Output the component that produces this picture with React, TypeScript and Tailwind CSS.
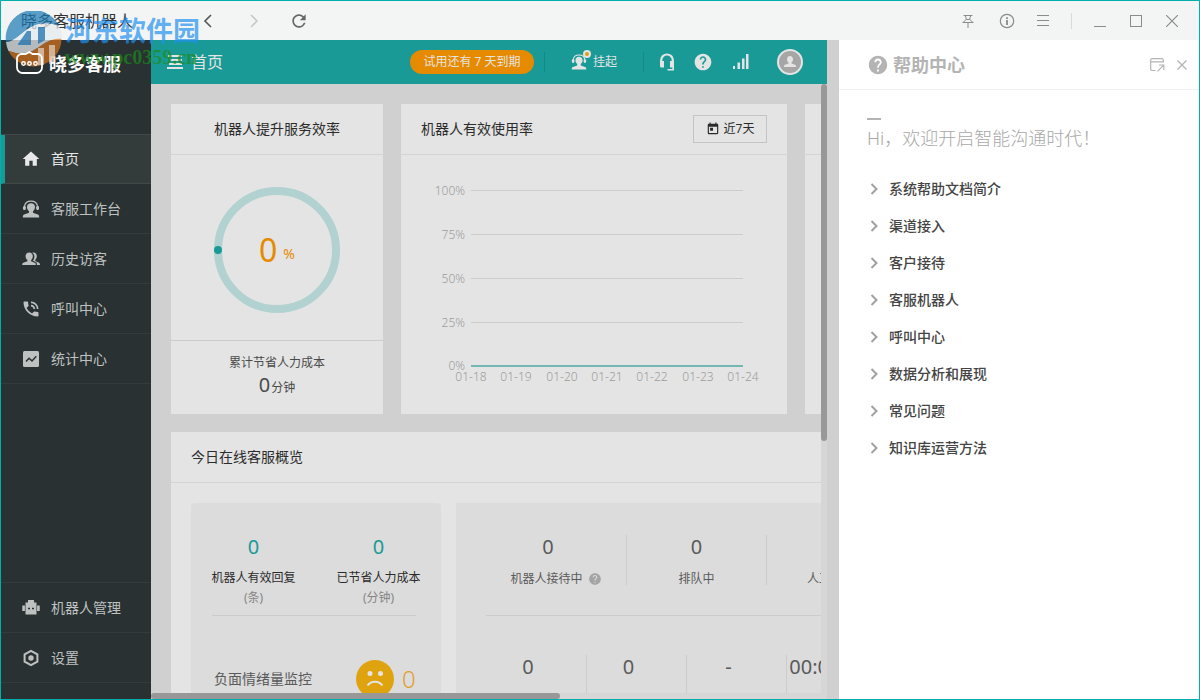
import type { ReactNode } from "react";
import { MdHome, MdPhoneInTalk, MdToday, MdHelp, MdRefresh } from "react-icons/md";

interface NavItem {
  label: string;
  icon: ReactNode;
  active?: boolean;
}

interface StatProps {
  value: string;
  label?: string;
  hint?: boolean;
  spacer?: string;
  className: string;
}

const days = ["01-18", "01-19", "01-20", "01-21", "01-22", "01-23", "01-24"]
const levels = ["100%", "75%", "50%", "25%", "0%"]
const helpTopics = ["系统帮助文档简介", "渠道接入", "客户接待", "客服机器人", "呼叫中心", "数据分析和展现", "常见问题", "知识库运营方法"]

function AgentIcon({ size = 18 }: { size?: number }) {
  return (
    <svg width={size} height={size} viewBox="0 0 18 18" fill="currentColor">
      <path d="M2.500 8V6.500C2.900 3 5.600 1.200 9 1.200s6.100 1.800 6.500 5.300V8" fill="none" stroke="currentColor" strokeWidth="1.200" />
      <rect x="1" y="6" width="2.800" height="4" rx="1.200" />
      <rect x="14.200" y="6" width="2.800" height="4" rx="1.200" />
      <path d="M9 3.200c2.500 0 4 1.600 4 3.900 0 1.800-.9 3.300-2 4.100v1.600l4.800 1.800c1 .4 1.400 1.100 1.400 2.900H.8c0-1.800.4-2.500 1.400-2.900L7 12.800v-1.600C5.900 10.400 5 8.900 5 7.100c0-2.300 1.500-3.900 4-3.900z" />
    </svg>
  )
}

function HeadsetIcon() {
  return (
    <svg width="16" height="18" viewBox="0 0 16 18" fill="none" stroke="currentColor">
      <path d="M2.200 9V7A5.800 5.500 0 0 1 13.800 7v2" strokeWidth="2.200" />
      <path d="M1 8h4v6.500H2.500A1.500 1.500 0 0 1 1 13zM11 8h4v6.500h-4z" fill="currentColor" stroke="none" />
      <path d="M14.200 13v3.800H8.500" strokeWidth="1.600" />
    </svg>
  )
}

function VisitorsIcon() {
  return (
    <svg width="18" height="18" viewBox="0 0 18 18" fill="currentColor">
      <path d="M7.200 2.500c2.300 0 3.600 1.600 3.600 3.800 0 1.700-.7 3-1.700 3.800v1.200l3.600 1.500c.8.400 1.200 1 1.200 2.200H.2c0-1.200.4-1.800 1.200-2.200l4-1.500v-1.200C4.300 9.300 3.600 8 3.600 6.300c0-2.200 1.300-3.800 3.600-3.800z" />
      <path d="M10.300 2.700c2.700-.8 4.500 1 4.500 3.500 0 1.500-.6 2.700-1.500 3.500v1.300l3.600 1.700c.8.400 1.100 1 1.100 2.300h-3c0-1.800-.6-2.700-1.700-3.200l-2.300-1v-.5c.9-.9 1.400-2.300 1.400-3.900 0-1.500-.8-2.900-2.100-3.700z" />
    </svg>
  )
}

function StatsIcon() {
  return (
    <svg width="18" height="18" viewBox="0 0 18 18">
      <rect x="1" y="1" width="16" height="16" rx="1.500" fill="currentColor" />
      <path d="M4 11.500l3-3.200 3 2.600 4.300-4.700" fill="none" stroke="#293132" strokeWidth="1.500" />
    </svg>
  )
}

function RobotIcon() {
  return (
    <svg width="18" height="18" viewBox="0 0 18 18" fill="currentColor">
      <path d="M6 1h6v2.500h2.500v12h-11v-12H6z" />
      <rect x="0.300" y="6.500" width="2.600" height="5.500" />
      <rect x="15.100" y="6.500" width="2.600" height="5.500" />
      <path d="M6 8.800h2v1.500H6zM10 8.800h2v1.500h-2z" fill="#293132" />
    </svg>
  )
}

function SettingsIcon() {
  return (
    <svg width="18" height="18" viewBox="0 0 18 18">
      <path d="M9 1.800l6.400 3.600v7.200L9 16.200l-6.400-3.600V5.400z" fill="none" stroke="currentColor" strokeWidth="2" />
      <circle cx="9" cy="9" r="2.700" fill="currentColor" />
    </svg>
  )
}

const mainNav: NavItem[] = [
  { label: "首页", icon: <MdHome size={20} />, active: true },
  { label: "客服工作台", icon: <AgentIcon /> },
  { label: "历史访客", icon: <VisitorsIcon /> },
  { label: "呼叫中心", icon: <MdPhoneInTalk size={20} /> },
  { label: "统计中心", icon: <StatsIcon /> },
]

const footNav: NavItem[] = [
  { label: "机器人管理", icon: <RobotIcon /> },
  { label: "设置", icon: <SettingsIcon /> },
]

function NavLink({ item }: { item: NavItem }) {
  return (
    <a
      href="#"
      className={
        item.active
          ? "flex h-[49px] items-center border-b border-l-4 border-b-[#414948] border-l-[#1a9a96] bg-[#343c3b] pl-4 text-sm text-[#e8e8e8]"
          : "flex h-[50px] items-center border-b border-[#333c3d] pl-5 text-sm text-[#bfc1c1]"
      }
    >
      <span className="flex w-5 justify-center">{item.icon}</span>
      <span className="ml-2.5">{item.label}</span>
    </a>
  )
}

function Watermark() {
  return (
    <div className="pointer-events-none absolute top-2.5 left-1 z-10 flex">
      <svg width="60" height="56" viewBox="0 0 60 56">
        <path d="M1 31A28 28 0 0 1 54 15C42 11 32 12 23 18 13 25 8 31 1 31z" fill="#1878b4" opacity="0.700" />
        <path d="M1 31c7 0 12-6 22-13 9-6 19-7 31-3 2 4 3 8 2.500 13-7-1-14 2-21 7-10 7-17 10-32 5A28 28 0 0 1 1 31z" fill="#e4eaec" opacity="0.750" />
        <path d="M3.500 40c15 5 22 2 32-5 7-5 14-8 21-7A28 28 0 0 1 3.500 40z" fill="#d9741a" opacity="0.700" />
        <path d="M13 33l9-13h4v14H13zM33 16h7v13l-7 4z" fill="#1d6fae" opacity="0.750" />
        <path d="M33 37h6v17h-6zM44 34h6v16l-6 3z" fill="#e9dfd6" opacity="0.650" />
      </svg>
      <div className="mt-1">
        <div className="text-[27px] leading-8 font-bold text-[#1f90f0]/70">河东软件园</div>
        <div className="font-['Liberation_Serif'] text-xl leading-5 font-bold text-[#1c8a1c]/70">www.pc0359.cn</div>
      </div>
    </div>
  )
}

function TitleBar() {
  return (
    <div className="flex h-[39px] shrink-0 items-center bg-[#f3f5f5] text-[#8b8b8b]">
      <span className="w-[187px] pl-5 text-base text-[#333]">晓多客服机器人</span>
      <button aria-label="后退" className="flex w-10 justify-center">
        <svg width="14" height="14" viewBox="0 0 14 14" fill="none" stroke="#555" strokeWidth="1.600"><path d="M10 1L4 7l6 6" /></svg>
      </button>
      <button aria-label="前进" className="ml-1.5 flex w-10 justify-center">
        <svg width="14" height="14" viewBox="0 0 14 14" fill="none" stroke="#c8c8c8" strokeWidth="1.600"><path d="M4 1l6 6-6 6" /></svg>
      </button>
      <button aria-label="刷新" className="ml-[5px] flex w-10 justify-center text-[#666]"><MdRefresh size={20} /></button>
      <div className="mr-[9px] ml-auto flex items-center">
        <button aria-label="置顶" className="flex w-[42px] justify-center">
          <svg width="14" height="14" viewBox="0 0 14 14" fill="none" stroke="currentColor"><path d="M2.500 1.500h9M4.500 2l.8 3.500-3.300 3M9.500 2l-.8 3.500 3.300 3M1.500 8.500h11M7 8.500V14M5.300 5.500h3.400" /></svg>
        </button>
        <button aria-label="关于" className="flex w-9 justify-center">
          <svg width="16" height="16" viewBox="0 0 16 16" fill="none" stroke="currentColor"><circle cx="8" cy="8" r="6.700" strokeWidth="1.200" /><path d="M8 4.200v1.800M8 7v5" strokeWidth="1.800" /></svg>
        </button>
        <button aria-label="菜单" className="flex w-9 justify-center">
          <svg width="12" height="12" viewBox="0 0 12 12" stroke="currentColor"><path d="M0 .5h12M0 5.500h12M0 10.500h12" /></svg>
        </button>
        <span className="mx-2.5 h-4 w-px bg-[#d8dada]" />
        <button aria-label="最小化" className="flex w-9 justify-center">
          <svg width="12" height="12" viewBox="0 0 12 12" stroke="currentColor"><path d="M0 11.500h12" /></svg>
        </button>
        <button aria-label="最大化" className="flex w-9 justify-center">
          <svg width="12" height="12" viewBox="0 0 12 12" fill="none" stroke="currentColor"><rect x="0.500" y="0.500" width="11" height="11" /></svg>
        </button>
        <button aria-label="关闭" className="flex w-9 justify-center">
          <svg width="12" height="12" viewBox="0 0 12 12" stroke="currentColor" strokeWidth="1.200"><path d="M0 0l12 12M12 0L0 12" /></svg>
        </button>
      </div>
    </div>
  )
}

function Sidebar() {
  return (
    <aside className="flex w-[150px] shrink-0 flex-col bg-[#293132]">
      <div className="flex h-[94px] items-start pt-2.5 pl-[15px] text-white">
        <svg width="27" height="26" viewBox="0 0 27 26" fill="none" stroke="currentColor" className="relative z-20">
          <path d="M5.500 4h4l4-2 3 2h5a4.500 4.500 0 0 1 4.500 4.500v9a5.500 5.500 0 0 1-5.500 5.500h-14A5.500 5.500 0 0 1 1 17.500v-9A4.500 4.500 0 0 1 5.500 4z" strokeWidth="1.800" />
          <g strokeWidth="1.500"><circle cx="7.500" cy="13.500" r="1.700" /><circle cx="13.500" cy="13.500" r="1.700" /><circle cx="19.500" cy="13.500" r="1.700" /></g>
        </svg>
        <span className="ml-1.5 text-lg leading-7 font-bold">晓多客服</span>
      </div>
      <nav className="border-t border-[#414948]">
        {mainNav.map(item => <NavLink key={item.label} item={item} />)}
      </nav>
      <nav className="mt-auto mb-4 border-t border-[#333c3d]">
        {footNav.map(item => <NavLink key={item.label} item={item} />)}
      </nav>
    </aside>
  )
}

function TopBar() {
  return (
    <header className="flex h-11 shrink-0 items-center bg-[#1a9a96] pr-6 pl-4 text-[#e4e4e4]">
      <button aria-label="收起菜单">
        <svg width="16" height="14" viewBox="0 0 16 14" stroke="currentColor" strokeWidth="2"><path d="M1 1h14M3 5h12M2 9h13M0 13h16" /></svg>
      </button>
      <h1 className="ml-2 text-base">首页</h1>
      <button className="ml-auto h-6 w-[124px] rounded-full bg-[#e68a00] text-xs">试用还有 7 天到期</button>
      <span className="ml-2.5 h-5 w-px bg-[#148a86]" />
      <button className="ml-[26px] flex items-center text-xs">
        <span className="relative">
          <AgentIcon size={16} />
          <span className="absolute -top-1 -right-1 size-2 rounded-full border-2 border-[#e4e4e4] bg-[#e0a010]" />
        </span>
        <span className="ml-1.5">挂起</span>
      </button>
      <span className="ml-[26px] h-5 w-px bg-[#148a86]" />
      <button aria-label="在线客服" className="ml-[15px]"><HeadsetIcon /></button>
      <button aria-label="帮助" className="ml-[18px]"><MdHelp size={20} /></button>
      <button aria-label="网络状态" className="ml-5">
        <svg width="16" height="16" viewBox="0 0 16 16" fill="currentColor"><path d="M0 12h2v3H0zM4.500 8.500h2.500V15H4.500zM9 4.500h2.500V15H9zM13 0h2.500v15H13z" /></svg>
      </button>
      <button aria-label="账号" className="ml-7 flex size-[26px] items-end justify-center rounded-full border-2 border-[#e4e4e4] bg-[#a6a6a6] pb-1">
        <svg width="14" height="14" viewBox="0 0 14 14" fill="currentColor"><path d="M7 1c2 0 3 1.400 3 3.200 0 1.400-.6 2.600-1.500 3.200v1.100l3.500 1.300c.8.300 1 1 1 2.200H1c0-1.200.2-1.900 1-2.200l3.500-1.300V7.400C4.600 6.800 4 5.600 4 4.200 4 2.400 5 1 7 1z" /></svg>
      </button>
    </header>
  )
}

function EfficiencyCard() {
  return (
    <section className="h-[310px] w-[212px] shrink-0 bg-[#e4e4e4]">
      <h2 className="h-[51px] border-b border-[#d4d4d4] text-center text-sm leading-[50px] text-[#2b2b2b]">机器人提升服务效率</h2>
      <div className="flex h-[186px] justify-center border-b border-[#cccccc] pt-8">
        <div className="relative size-[126px]">
          <svg width="126" height="126" viewBox="0 0 126 126">
            <circle cx="63" cy="63" r="59" fill="none" stroke="#b1d2d0" strokeWidth="8" />
            <circle cx="4" cy="63" r="4" fill="#1a9a96" />
          </svg>
          <div className="absolute inset-0 flex items-center justify-center gap-1.5 text-[#e68a00]">
            <span className="text-[32px] leading-8">0</span>
            <span className="pt-2 text-sm">%</span>
          </div>
        </div>
      </div>
      <div className="pt-3 text-center text-xs text-[#4a4a4a]">
        <p className="leading-5">累计节省人力成本</p>
        <p className="flex items-baseline justify-center gap-px leading-6"><span className="text-xl leading-6">0</span>分钟</p>
      </div>
    </section>
  )
}

function UsageChart() {
  return (
    <svg width="346" height="220" viewBox="0 0 346 220" className="font-light">
      {levels.map((l, i) => (
        <g key={l}>
          <text x="44" y={24 + i * 44 - (l === "0%" ? 1 : 0)} textAnchor="end" fontSize="12" fill="#9c9c9c">{l}</text>
          {l !== "0%" && <path d={`M50 ${19.5 + i * 44}h272`} stroke="#cccccc" />}
        </g>
      ))}
      <path d="M50 195h272" stroke="#74b8b5" strokeWidth="2" />
      {days.map((d, i) => (
        <text key={d} x={50 + Math.round(i * 45.3)} y="210" textAnchor="middle" fontSize="12" fill="#9c9c9c">{d}</text>
      ))}
    </svg>
  )
}

function UsageCard() {
  return (
    <section className="h-[310px] w-[386px] shrink-0 bg-[#e4e4e4]">
      <div className="flex h-[51px] items-center justify-between border-b border-[#d4d4d4] px-5">
        <h2 className="text-sm text-[#2b2b2b]">机器人有效使用率</h2>
        <button className="flex h-7 w-[74px] items-center justify-center gap-1 border border-[#c4c4c4] text-xs text-[#2b2b2b]">
          <MdToday size={14} />近7天
        </button>
      </div>
      <div className="px-5 pt-4"><UsageChart /></div>
    </section>
  )
}

function Stat({ value, label, hint, spacer, className }: StatProps) {
  return (
    <div className={className}>
      <div className={hint ? "pr-4 text-xl leading-6" : "text-xl leading-6"}>{value}</div>
      <div className="mt-3 flex h-4 items-center justify-center text-xs">
        {label}
        {spacer && <span className={spacer} />}
        {hint && <MdHelp size={14} className="ml-[5px] text-[#a4a4a4]" />}
      </div>
    </div>
  )
}

function OverviewCard() {
  return (
    <section className="bg-[#e4e4e4]">
      <h2 className="h-[51px] border-b border-[#d4d4d4] pl-5 text-sm leading-[50px] text-[#2b2b2b]">今日在线客服概览</h2>
      <div className="flex gap-[15px] p-5">
        <div className="w-[250px] shrink-0 rounded-sm bg-[#dcdcdc] pt-8 pb-10">
          <div className="grid grid-cols-2 text-center text-xs">
            {[["机器人有效回复", "(条)"], ["已节省人力成本", "(分钟)"]].map(([name, unit]) => (
              <div key={name}>
                <div className="text-xl leading-6 text-[#1a9a96]">0</div>
                <div className="mt-[9px] leading-5 text-[#2b2b2b]">{name}</div>
                <div className="leading-5 text-[#858585]">{unit}</div>
              </div>
            ))}
          </div>
          <div className="mt-[7px] mr-[25px] ml-[21px] border-t border-[#cccccc]" />
          <div className="mt-11 flex items-center pl-[23px] text-sm text-[#5a5a5a]">
            负面情绪量监控
            <svg width="38" height="38" viewBox="0 0 38 38" className="ml-11">
              <circle cx="19" cy="19" r="19" fill="#dfa30f" />
              <circle cx="14" cy="13.500" r="2.500" fill="#e4e4e4" />
              <circle cx="24.500" cy="13.500" r="2.500" fill="#e4e4e4" />
              <path d="M11.500 25.500c4-5 11-5 15 0" fill="none" stroke="#e4e4e4" strokeWidth="2" />
            </svg>
            <span className="ml-2 text-2xl font-light text-[#e0a030]">0</span>
          </div>
        </div>
        <div className="flex-1 bg-[#dcdcdc] px-[30px] pt-8 text-center text-[#5a5a5a]">
          <div className="flex">
            <Stat value="0" label="机器人接待中" hint className="h-[50px] w-[141px] border-r border-[#cccccc]" />
            <Stat value="0" label="排队中" className="h-[50px] w-[140px] border-r border-[#cccccc]" />
            <Stat value="0" label="人工接待中" className="h-[50px] w-[140px]" />
          </div>
          <div className="mt-[30px] border-t border-[#cccccc]" />
          <div className="mt-[39px] flex">
            <Stat value="0" hint spacer="w-12" className="h-[50px] w-[101px] border-r border-[#cccccc]" />
            <Stat value="0" hint spacer="w-[60px]" className="h-[50px] w-[100px] border-r border-[#cccccc]" />
            <Stat value="-" hint spacer="w-[60px]" className="h-[50px] w-[100px] border-r border-[#cccccc]" />
            <Stat value="00:00:00" hint spacer="w-[60px]" className="h-[50px] w-[100px]" />
          </div>
        </div>
      </div>
    </section>
  )
}

function HelpPanel() {
  return (
    <aside className="w-[360px] shrink-0 bg-white">
      <div className="flex h-[50px] items-center border-b border-[#f0f0f0] pr-3 pl-7 text-[#b4b4b4]">
        <MdHelp size={22} />
        <h2 className="ml-1 text-lg font-bold">帮助中心</h2>
        <button aria-label="新窗口打开" className="ml-auto">
          <svg width="15" height="14" viewBox="0 0 15 14" fill="none" stroke="currentColor" strokeWidth="1.200"><path d="M5.500 12.500H2A1.300 1.300 0 0 1 .7 11.200V2A1.300 1.300 0 0 1 2 .7h10A1.300 1.300 0 0 1 13.300 2v2.500M.7 3.800h12.600M7.500 13.300l6-6M9 7h4.800v5" /></svg>
        </button>
        <button aria-label="关闭帮助" className="ml-3">
          <svg width="10" height="10" viewBox="0 0 10 10" stroke="currentColor" strokeWidth="1.300"><path d="M.5.5l9 9M9.500.5l-9 9" /></svg>
        </button>
      </div>
      <div className="px-7 pt-7">
        <div className="h-0.5 w-3.5 bg-[#b4b4b4]" />
        <p className="mt-1 text-lg leading-7 font-light text-[#a8a8a8]">Hi，欢迎开启智能沟通时代！</p>
        <ul className="mt-[18px]">
          {helpTopics.map(topic => (
            <li key={topic}>
              <a href="#" className="flex h-[37px] items-center text-sm font-medium text-[#444]">
                <svg width="14" height="12" viewBox="0 0 14 12" fill="none" stroke="#a0a0a0" strokeWidth="2"><path d="M4.500 1l5 5-5 5" /></svg>
                <span className="ml-2">{topic}</span>
              </a>
            </li>
          ))}
        </ul>
      </div>
    </aside>
  )
}

export default function App() {
  return (
    <div className="relative flex h-screen flex-col overflow-hidden border border-[#00afad] font-['Noto_Sans','Noto_Sans_CJK_SC',sans-serif]">
      <Watermark />
      <TitleBar />
      <div className="flex min-h-0 flex-1">
        <Sidebar />
        <main className="flex min-w-0 flex-1 flex-col">
          <TopBar />
          <div className="flex min-h-0 flex-1 bg-[#d0d0d0]">
            <div className="flex min-w-0 flex-1 flex-col">
              <div className="min-h-0 flex-1 overflow-hidden">
                <div className="flex w-[1100px] flex-col gap-[18px] p-5">
                  <div className="flex gap-[18px]">
                    <EfficiencyCard />
                    <UsageCard />
                    <section className="h-[310px] flex-1 bg-[#e4e4e4]">
                      <div className="h-[51px] border-b border-[#d4d4d4]" />
                    </section>
                  </div>
                  <OverviewCard />
                </div>
              </div>
              <div className="h-1.5 shrink-0 bg-[#d6d6d6]"><div className="h-1.5 w-[61%] rounded-full bg-[#989898]" /></div>
            </div>
            <div className="w-1.5 shrink-0 bg-[#d6d6d6]"><div className="h-[58%] rounded-full bg-[#989898]" /></div>
          </div>
        </main>
        <div className="w-3 shrink-0 bg-[#d0d0d0]" />
        <HelpPanel />
      </div>
    </div>
  )
}
